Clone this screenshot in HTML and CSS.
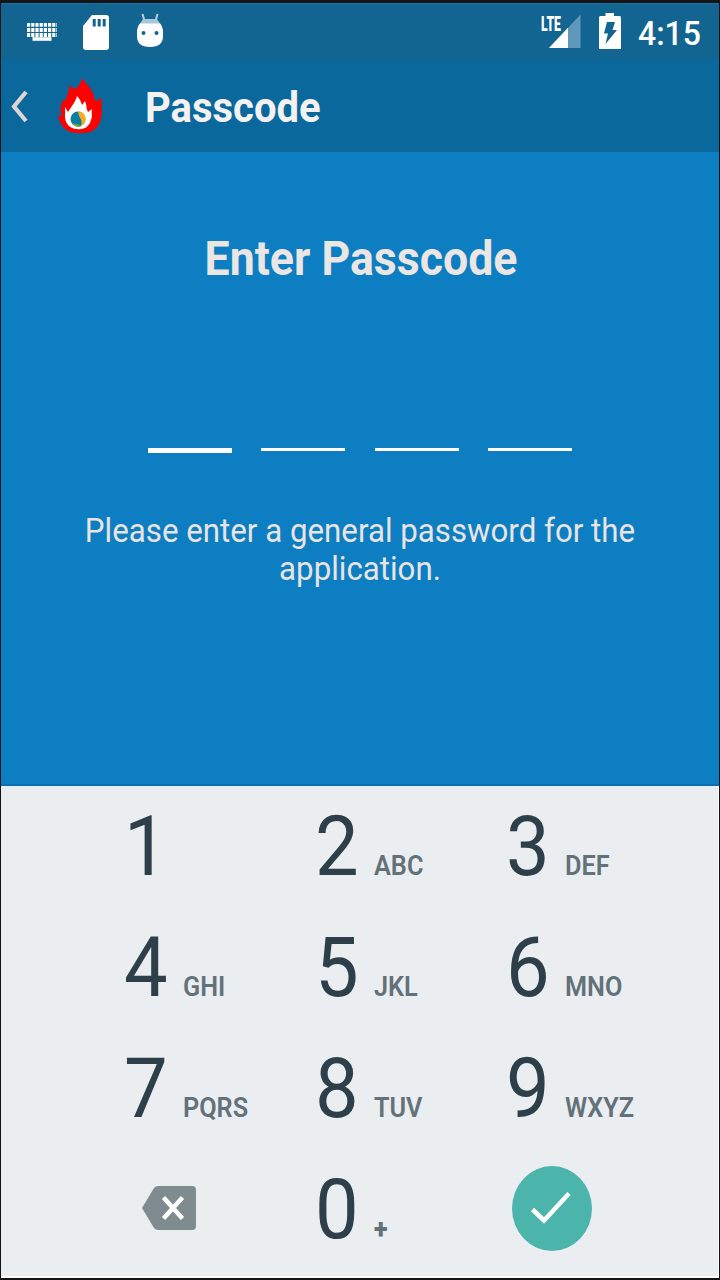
FILE: index.html
```html
<!DOCTYPE html>
<html lang="en">
<head>
    <meta charset="UTF-8">
    <meta name="viewport" content="width=device-width, initial-scale=1.0">
    <title>Passcode</title>
    <link rel="stylesheet" href="styles.css">
</head>
<body>
    <div class="screen">
        <!-- status bar -->
        <div class="status-bar">
            <div class="status-left">
                <svg class="icon-keyboard" width="32" height="18" viewBox="0 0 32 18">
                    <path d="M1 1.8H31M1 7H31M1 12H31" stroke="#fff" stroke-width="3.8" stroke-dasharray="3.2 1"/>
                    <path d="M6.5 16H25.500" stroke="#fff" stroke-width="3.6"/>
                </svg>
                <svg class="icon-sd" width="28" height="37" viewBox="0 0 28 37">
                    <path d="M10 1H24Q27 1 27 4V33Q27 36 24 36H4Q1 36 1 33V12Z" fill="#fff"/>
                    <path d="M12.2 5V12.500M17.2 5V12.500M22.2 5V12.500" stroke="#126591" stroke-width="3"/>
                </svg>
                <svg class="icon-android" width="28" height="35" viewBox="0 0 28 35">
                    <path d="M6.5 1L8.5 8M21.5 1L19.5 8" stroke="#b6cfde" stroke-width="2"/>
                    <path d="M7 6H21L25 12H3Z" fill="#a9c7d8"/>
                    <path d="M4 10.500H24Q27 14 27 19V23Q27 34 14 34Q1 34 1 23V19Q1 14 4 10.500Z" fill="#fff"/>
                    <circle cx="7.5" cy="20" r="2" fill="#126591"/>
                    <circle cx="20.5" cy="20" r="2" fill="#126591"/>
                </svg>
            </div>
            <div class="status-right">
                <div class="network">
                    <svg width="32" height="28" viewBox="0 0 32 28">
                        <path d="M1 28L32.500 -5.500V28Z" fill="#5f98ba"/>
                        <path d="M1 28L20 7.800V28Z" fill="#fff"/>
                    </svg>
                    <span class="lte">LTE</span>
                </div>
                <svg class="icon-battery" width="22" height="36" viewBox="0 0 22 36">
                    <path d="M6.5 0H15V3H20.500Q22 3 22 4.500V36H0V4.500Q0 3 1.500 3H6.5Z" fill="#fff"/>
                    <path d="M8 9H16L13.5 17H18L6.5 31L9 20.500H5Z" fill="#126591"/>
                </svg>
                <span class="clock">4:15</span>
            </div>
        </div>

        <!-- title bar -->
        <div class="header">
            <svg class="back" width="18" height="34" viewBox="0 0 18 34">
                <path d="M15 2L3 16.500L15 31" fill="none" stroke="#dfd5d3" stroke-width="4.200"/>
            </svg>
            <svg class="logo" width="44" height="57" viewBox="0 0 44 57">
                <path d="M24 1C29 8 36 13 37 24C40 24 42 22 43 20C44 25 43 29 44 34C44 47 37 56 26 56H17C8 55 2 49 0 38L4 39C2 33 2 28 6 22L8 24C8 18 12 14 11 8L16 12C21 10 23 6 24 1Z" fill="#f00"/>
                <path d="M19 19C22 22 23 25 24 28L27 24C29 29 28 31 30 35L34 32C33 36 35 39 33 43C31 50 26 53 19 52C11 52 7 45 7 40V30L10 35C13 30 17 26 19 19Z" fill="#fff"/>
                <circle cx="20" cy="42" r="7.500" fill="#087ea3"/>
                <path d="M20 34.500A7.500 7.500 0 0 1 23 48.900Q25 44 21 39Z" fill="#f6ae20"/>
                <path d="M14 46.500Q19 51.500 23 48.900L20 47Z" fill="#62a33f"/>
            </svg>
            <span class="header-title">Passcode</span>
        </div>

        <div class="prompt">
            <h1>Enter Passcode</h1>
            <div class="digits">
                <div class="digit active"></div>
                <div class="digit"></div>
                <div class="digit"></div>
                <div class="digit"></div>
            </div>
            <p>Please enter a general password for the<br>application.</p>
        </div>

        <!-- keypad -->
        <div class="keypad">
            <div class="key"><span class="num">1</span></div>
            <div class="key"><span class="num">2</span><span class="letters">ABC</span></div>
            <div class="key"><span class="num">3</span><span class="letters">DEF</span></div>
            <div class="key"><span class="num">4</span><span class="letters">GHI</span></div>
            <div class="key"><span class="num">5</span><span class="letters">JKL</span></div>
            <div class="key"><span class="num">6</span><span class="letters">MNO</span></div>
            <div class="key"><span class="num">7</span><span class="letters">PQRS</span></div>
            <div class="key"><span class="num">8</span><span class="letters">TUV</span></div>
            <div class="key"><span class="num">9</span><span class="letters">WXYZ</span></div>
            <div class="key key-delete">
                <svg width="54" height="44" viewBox="0 0 54 44">
                    <path d="M16 0H50Q54 0 54 4V40Q54 44 50 44H16Q13.500 44 12 42L0 22L12 2Q13.500 0 16 0Z" fill="#7f8b8f"/>
                    <path d="M21.500 11.500L40.500 32.500M40.500 11.500L21.500 32.500" stroke="#fff" stroke-width="4.500"/>
                </svg>
            </div>
            <div class="key"><span class="num">0</span><span class="letters plus">+</span></div>
            <div class="key key-ok">
                <svg width="80" height="85" viewBox="0 0 80 85">
                    <ellipse cx="40" cy="42.500" rx="40" ry="42.500" fill="#4cb5ab"/>
                    <path d="M20.500 43.500L32 54.500L57 27.500" fill="none" stroke="#fff" stroke-width="4.500"/>
                </svg>
            </div>
        </div>
    </div>
</body>
</html>
```
FILE: styles.css
```css
* {
    box-sizing: border-box;
}
body {
    margin: 0;
    font-family: Roboto, "Liberation Sans", sans-serif;
    background-color: #141414;
}
.screen {
    width: 720px;
    height: 1280px;
    padding: 3px 1px 2px 1px;
    display: flex;
    flex-direction: column;
    overflow: hidden;
}
.status-bar {
    height: 57px;
    padding: 0 19px 0 25px;
    border-top: 1px solid #1472a8;
    display: flex;
    justify-content: space-between;
    background-color: #126591;
    color: #fff;
}
.status-left, .status-right {
    display: flex;
    align-items: flex-start;
}
.icon-keyboard {
    margin-top: 19px;
}
.icon-sd {
    margin: 10px 0 0 24px;
}
.icon-android {
    margin: 9px 0 0 26px;
}
.network {
    position: relative;
    margin: 16px 19px 0 0;
    height: 28px;
}
.network svg {
    display: block;
    overflow: visible;
}
.lte {
    position: absolute;
    left: -7px;
    top: -8px;
    font-size: 21px;
    line-height: 24px;
    font-weight: 900;
    transform: scaleX(0.58);
    transform-origin: left;
}
.icon-battery {
    margin-top: 9px;
}
.clock {
    width: 62px;
    margin-left: 17px;
    font-size: 34px;
    line-height: 58px;
    font-weight: 500;
    white-space: nowrap;
    transform: scaleX(0.94);
    transform-origin: left;
}
.header {
    height: 92px;
    padding-left: 10px;
    display: flex;
    align-items: center;
    background-color: #0a689d;
}
.back {
    margin-top: 1px;
}
.logo {
    margin: -2px 0 0 29px;
}
.header-title {
    margin: 2px 0 0 43px;
    font-size: 43px;
    font-weight: bold;
    color: #f4f1f1;
    transform: scaleX(0.93);
    transform-origin: left;
}
.prompt {
    height: 634px;
    border-bottom: 2px solid #0871b3;
    background-color: #0c7ec1;
    text-align: center;
}
h1 {
    margin: 79px 0 0;
    font-size: 48px;
    line-height: 56px;
    color: #ebe5e4;
    transform: translateX(1px) scaleX(0.93);
}
.digits {
    height: 6px;
    margin-top: 161px;
    display: flex;
    justify-content: center;
    gap: 29.5px;
}
.digit {
    width: 84px;
    height: 3px;
    background-color: #fff;
}
.digit.active {
    height: 5px;
}
p {
    margin: 58px 0 0;
    font-size: 33.5px;
    line-height: 38px;
    color: #e9e4e3;
    transform: scaleX(0.933);
}
.keypad {
    flex: 1;
    padding-left: 123px;
    border: solid #fafbfb;
    border-width: 0 1px 2px 0;
    display: grid;
    grid-template-columns: 191px 191px 191px;
    grid-auto-rows: 121px;
    background-color: #ebeef1;
}
.key {
    display: flex;
    align-items: baseline;
}
.num {
    width: 58.5px;
    font-size: 84px;
    line-height: 121px;
    color: #2d3f48;
    transform: scaleX(0.925);
    transform-origin: left;
}
.letters {
    font-size: 27px;
    font-weight: 600;
    color: #637178;
    transform: scaleX(0.935);
    transform-origin: left;
}
.letters.plus {
    font-weight: 900;
}
.key-delete, .key-ok {
    align-items: flex-start;
}
.key-delete {
    padding: 37px 0 0 18px;
}
.key-ok {
    padding: 17px 0 0 6px;
}
```
